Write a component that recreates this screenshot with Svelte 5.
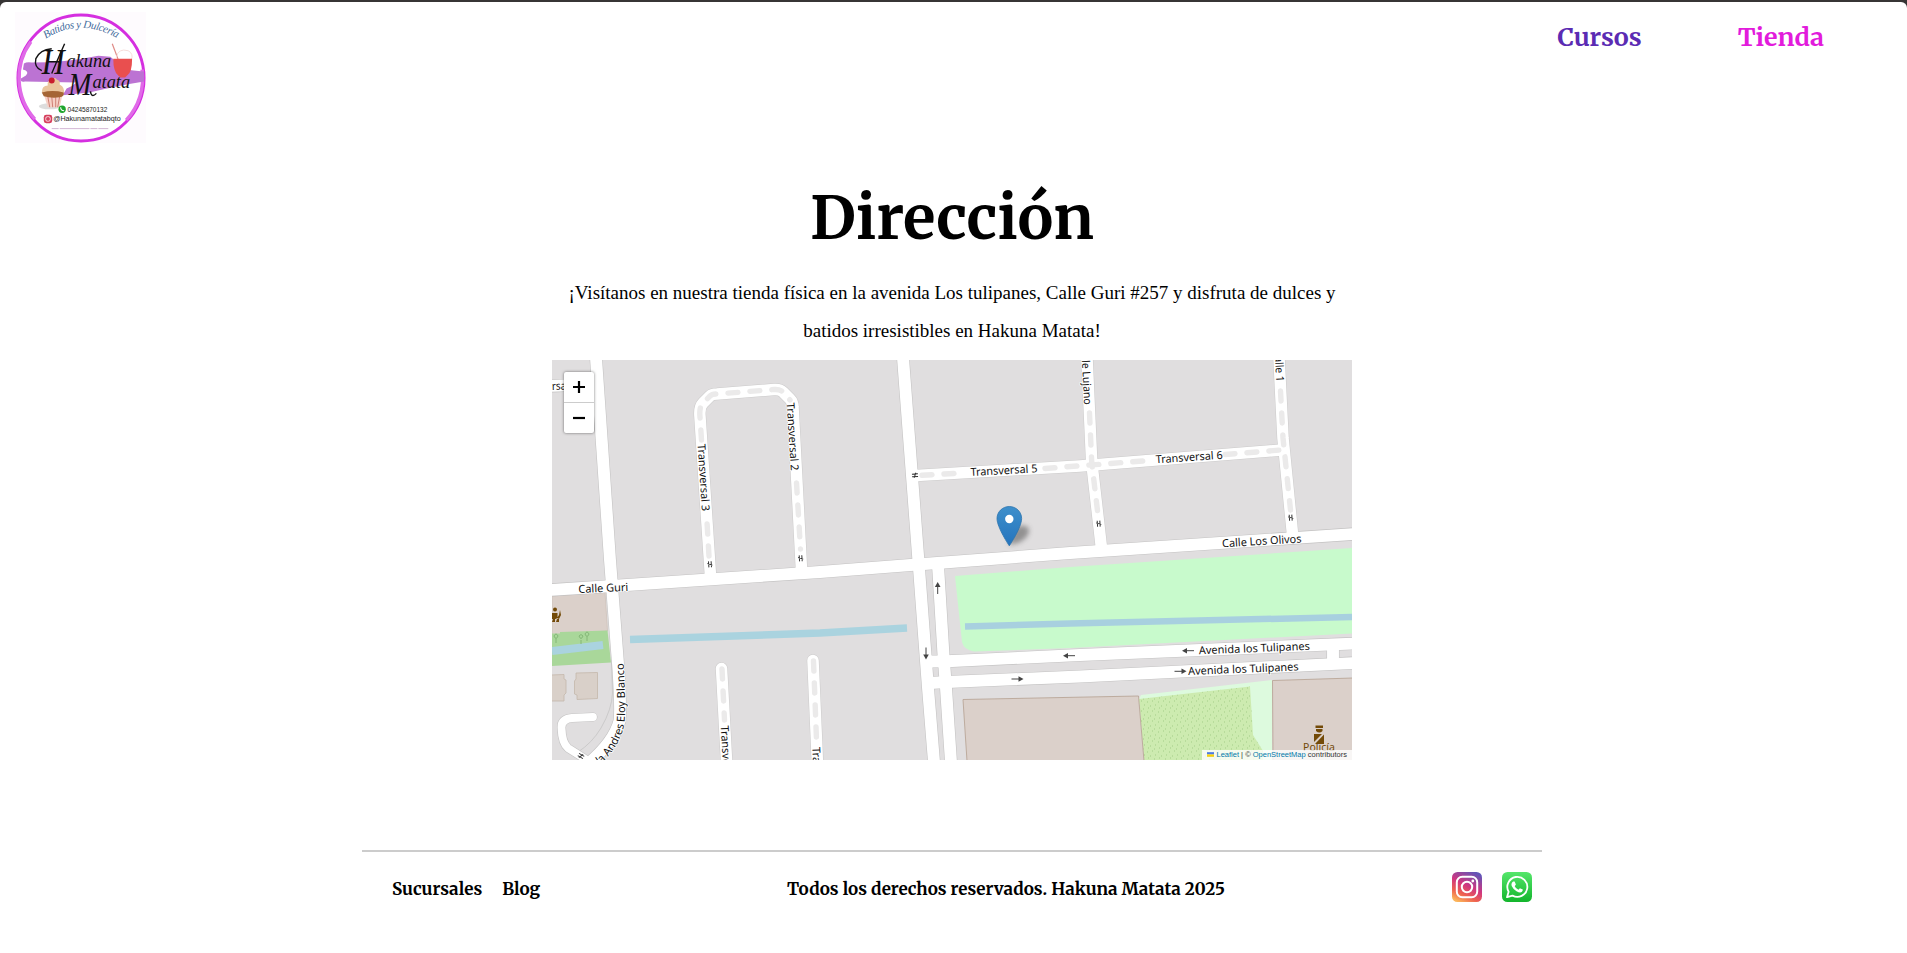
<script>
  const gates = [
    [248.7, 198.3, 86], [158, 204.3, 86], [363, 115.3, -3],
    [546.7, 163.7, 86], [738.7, 157.7, 86], [29, 396, 30]
  ];
  const arrows = [
    [385.7, 228, -90], [374, 293.5, 90], [517, 295.7, 180],
    [465.5, 319, 0], [636, 290.7, 180], [628.5, 311.3, 0]
  ];
  const roads = [
    'M-2 26 L46 24',
    'M44 -2 L58 200 L66.5 310 Q69 350 67.5 361 Q62 382 36 404',
    'M-2 230 L60 226 L268 212 L365 204.5 L518 193 L802 174',
    'M351 -2 L366 195 L376 328 L382 402',
    'M386 205 L391.5 295 L394 328 L399 402',
    'M376 301.5 L395 301.2 L528 295 L802 283.5',
    'M378 323 L395 322 L528 316.5 L802 303',
    'M781 285 V304'
  ];
  const alleys = [
    'M364 115.5 L528 106 L730 90',
    'M535 -2 L539.7 102 L549.7 190',
    'M727 -2 L731 78 L740.5 174',
    'M158.5 216 L148 57 Q147 47 151 43 L158 36 Q160 34 165 34 L222 29.5 Q228 29 231 32 L238 39 Q241 42 241 47 L249.5 210',
    'M169.5 308.5 L174.7 404',
    'M261 300.5 L265.5 404'
  ];
  const labels = [
    ['Transversal 5', 418.7, 116, -3.2, 67], ['Transversal 6', 604, 103.3, -3.9, 67],
    ['Calle Los Olivos', 670.3, 187.3, -3.5, 79.5], ['Calle Guri', 26.5, 233, -2.5, 50],
    ['Avenida los Tulipanes', 647, 294.3, -2.3, 111], ['Avenida los Tulipanes', 636.3, 315, -2.4, 110.5],
    ['Transversal 3', 145.6, 84.3, 86.3, 67], ['Transversal 2', 234.6, 43, 86.3, 68],
    ['Transversal 3', 168.8, 365.7, 87, 67], ['Transversal 2', 260.2, 387.3, 87, 67],
    ['Calle Lujano', 529, -15, 87, 60], ['Calle 1', 722.6, -10, 87, 32],
    ['rsal', 0, 30, -2, 17]
  ];
</script>

<div class="frame">
  <div class="page">
    <header>
      <svg class="logo" viewBox="0 0 132 132" role="img" aria-label="Hakuna Matata">
        <rect width="132" height="132" fill="#fefbfe" />
        <circle cx="66.500" cy="66.500" r="63.500" fill="#fff" stroke="#d52fe0" stroke-width="3" />
        <path d="M16 30 A62 62 0 0 0 20 108 M112 109 A62 62 0 0 0 128 58" fill="none" stroke="#e06be8" stroke-width="3.400" />
        <path d="M17 51 Q12 50 9 52 L8 58 Q15 60 11 64 L6 67 Q5 71 10 70 L62 71 Q58 75 52 77 L48 84 L75 81 Q105 74 130 70 L130 60 Q118 59 112 58 L96 45 L84 44 Q50 51 17 51Z" fill="#bc73d3" />
        <path id="logo-arc" d="M31 27 Q66 4 108 29" fill="none" />
        <text class="arc" textLength="76"><textPath href="#logo-arc">Batidos y Dulcería</textPath></text>
        <g class="script">
          <text x="27" y="62" font-size="36" textLength="23" lengthAdjust="spacingAndGlyphs">H</text>
          <text x="52" y="55" font-size="19" textLength="45" lengthAdjust="spacingAndGlyphs">akuna</text>
          <text x="54" y="84" font-size="32" textLength="23" lengthAdjust="spacingAndGlyphs">M</text>
          <text x="78" y="77" font-size="18" textLength="38" lengthAdjust="spacingAndGlyphs">atata</text>
        </g>
        <path d="M27 59 Q19 56 21 47 Q25 38 37 37 M50 32 Q42 50 37 62 M76 80 Q77 87 82 82" fill="none" stroke="#111" stroke-width="1.400" />
        <path d="M104 48 L98 32" stroke="#df8b86" stroke-width="1.200" />
        <path d="M102 46 Q104 36 114 39 Q120 42 117 49" fill="none" stroke="#f6ddda" />
        <path d="M99 47 H118 Q118 61 113 64 L111 66 H106 L104 64 Q99 60 99 47Z" fill="#e94f4f" />
        <ellipse cx="35" cy="95" rx="11" ry="3" fill="#ddd" />
        <path d="M29 83 H48 L45 96 H33Z" fill="#f6d0c6" />
        <path d="M33 85 L35 96 M37 85 L38 96 M41 85 V96 M45 85 L43 96" stroke="#cf7f74" />
        <path d="M27 81 Q27 74 33 74 Q32 69 37 68 Q40 65 42 68 Q46 69 45 73 Q51 76 49 83 Q38 87 27 81Z" fill="#eac59d" />
        <path d="M27 81 Q38 78 49 81 Q50 85 45 86 Q36 87 29 85Z" fill="#a56535" />
        <circle cx="37" cy="69" r="3" fill="#c91d2d" />
        <circle cx="47.500" cy="98" r="3.700" fill="#1fa52c" />
        <path d="M46 96 Q46 99.500 49.500 99.500" fill="none" stroke="#fff" stroke-width="1.100" />
        <text class="contact" x="53" y="101" textLength="40" lengthAdjust="spacingAndGlyphs">04245870132</text>
        <rect x="29" y="103.500" width="8.500" height="8.500" rx="2.500" fill="#d6405e" />
        <rect x="31" y="105.500" width="4.500" height="4.500" rx="1.500" fill="none" stroke="#fff" stroke-width=".8" />
        <text class="contact" x="38.500" y="110" textLength="68" lengthAdjust="spacingAndGlyphs">@Hakunamatatabqto</text>
        <path d="M37 117.500 H94" stroke="#c7a4c9" stroke-width=".8" stroke-dasharray="7 1 30 1" />
      </svg>
      <nav>
        <a class="courses" href="#cursos">Cursos</a>
        <a class="shop" href="#tienda">Tienda</a>
      </nav>
    </header>

    <main>
      <h1>Dirección</h1>
      <p>¡Visítanos en nuestra tienda física en la avenida Los tulipanes, Calle Guri #257 y disfruta de dulces y batidos irresistibles en Hakuna Matata!</p>

      <div class="map">
        <svg class="tiles" viewBox="0 0 800 400">
          <defs>
            <pattern id="scrub" width="11" height="10" patternUnits="userSpaceOnUse">
              <path d="M1 2h1M6 1h1M4 6h1M9 5h1M8 9h1M2 8h1" stroke="#a3cd87" />
            </pattern>
            <linearGradient id="pin" x2="0" y2="1">
              <stop stop-color="#3e8fcb" /><stop offset="1" stop-color="#2574bd" />
            </linearGradient>
            <filter id="soft" x="-40%" y="-40%" width="180%" height="180%"><feGaussianBlur stdDeviation="2.500" /></filter>
          </defs>
          <rect width="800" height="400" fill="#e0dedf" />

          <path d="M403 216 L518 207 L800 188 V273.500 L518 288 L422 291.500 Q412 290 410 282Z" fill="#c8facc" />
          <path d="M0 236 L53 232 L55.500 271 L0 275Z" fill="#dbd0ca" stroke="#cbbdb3" stroke-width=".6" />
          <path d="M0 273.500 H8 V272 L55.500 270.500 L59 302.500 L0 306Z" fill="#a9d79a" />
          <path d="M0 291 L51 285" stroke="#aad3df" stroke-width="8" />
          <g fill="none" stroke="#84b777" stroke-width="1">
            <path d="M29 284v-4m-2-4q2 5 4 0q-2-3-4 0M35 281v-4m-2-3q2 5 4 0q-2-4-4 0M4 283v-4m-2-3q2 5 4 0q-2-4-4 0" />
          </g>
          <path d="M78 279.500 L268 273 L355 268" fill="none" stroke="#aad3df" stroke-width="7.500" />
          <path d="M413 266.500 L518 263.500 L800 257" fill="none" stroke="#a8d0df" stroke-width="6.500" />
          <g fill="#d9d0c9" stroke="#c4b7ab" stroke-width=".8">
            <path d="M-1 315 L12 314.500 V319 L14 320 V333 L12 335 V341 L-1 341Z" />
            <path d="M24 313 L45.500 312.500 V338.500 L25 339.500 V335 L22.500 334 V321 L24 319Z" />
          </g>
          <path d="M587 339 L589 335 L720 320 V400 H592Z" fill="#ddfade" />
          <path d="M587 339 L698 326.500 L701 375 L711 391 V400 H592Z" fill="#cdebb0" />
          <path d="M587 339 L698 326.500 L701 375 L711 391 V400 H592Z" fill="url(#scrub)" />
          <g fill="#dbd0ca" stroke="#b9a697" stroke-width=".9">
            <path d="M411 339.500 L586.500 336 L592 401 H415Z" />
            <path d="M720.500 320.500 L801 318 V401 H721Z" />
          </g>

          <path d="M59.500 300 L60.500 333 Q60 349 49 368 Q40 383 26 392" fill="none" stroke="#cbcaca" />
          <g fill="none" stroke="#c3c2c2" stroke-width="13" stroke-linejoin="round">
            {#each roads as d}<path {d} />{/each}
          </g>
          <g fill="none" stroke="#cbcaca" stroke-width="12.500" stroke-linecap="round">
            {#each alleys as d}<path {d} />{/each}
          </g>
          <path d="M41 357 L20 358 Q9 359 9.500 368 Q10 383 16 388 L38 402" fill="none" stroke="#c5c4c4" stroke-width="9" stroke-linecap="round" />
          <g fill="none" stroke="#fff" stroke-width="11.900" stroke-linejoin="round">
            {#each roads as d}<path {d} />{/each}
          </g>
          <g fill="none" stroke="#fff" stroke-width="11.500" stroke-linecap="round">
            {#each alleys as d}<path {d} />{/each}
          </g>
          <path d="M41 357 L20 358 Q9 359 9.500 368 Q10 383 16 388 L38 402" fill="none" stroke="#fff" stroke-width="7.800" stroke-linecap="round" />
          <g fill="none" stroke="#ebeaea" stroke-width="5.400" stroke-linecap="round" stroke-dasharray="10 12">
            <path d="M370 115.300 L410 113" /><path d="M493 108.500 L597 100.500" /><path d="M673 94.500 L729 90" />
            <path d="M537.500 53 L539.700 102 L546 155" /><path d="M728.500 31 L731 78 L738.500 150" />
            <path d="M157 196 L155 162" /><path d="M149.500 80 L148 57 Q147 47 151 43 L158 36 Q160 34 165 34 L222 29.500 Q228 29 231 32 L238 40" />
            <path d="M244.500 123 L248.500 189" /><path d="M170 309 L172.500 360" /><path d="M261.500 301 L264.500 380" />
          </g>

          {#each gates as [x, y, angle]}
            <g transform="translate({x} {y}) rotate({angle})" stroke="#333">
              <path d="M-3 -1.300H3M-3 1.300H3M-1 2.500L1 -2.500" />
            </g>
          {/each}
          {#each arrows as [x, y, angle]}
            <g transform="translate({x} {y}) rotate({angle})">
              <path d="M-6 0H2" stroke="#444" /><path d="M1 -2.800L6 0L1 2.800Z" fill="#444" />
            </g>
          {/each}

          <g class="labels">
            {#each labels as [name, x, y, angle, length]}
              <text transform="translate({x} {y}) rotate({angle})" textLength={length} lengthAdjust="spacingAndGlyphs">{name}</text>
            {/each}
            <path id="blanco" d="M-14 448 L50 403 Q70 383 72.500 362 Q74 345 71.500 303" fill="none" />
            <text text-anchor="end"><textPath href="#blanco" startOffset="100%">Avenida Andres Eloy Blanco</textPath></text>
          </g>

          <g fill="#734a08">
            <path d="M763.500 365.500h7.500v2.500h-7.500zM764 369h6.500v2q-3 3-6.500 0z" />
            <path d="M762 374h8l-8 8zM772 374.500v9.500h-9z" />
            <circle cx="3" cy="249.500" r="2" /><path d="M0 253h5.500v5l-2 1h-3.500zM8 250l1 5-2 4-2-1 2-3zM1 259h2v3h-3zM5 259h2v3h-3z" />
          </g>
          <text class="poi" x="767" y="390.600" text-anchor="middle">Policía</text>

          <path d="M457 185 Q458 173 464 167 Q473 163 477 169 Q478 177 466 183Z" fill="#444" opacity=".5" filter="url(#soft)" />
          <path transform="translate(445 146.500) scale(.985 .96)" d="M12.500 0C5.600 0 0 5.600 0 12.500C0 21.900 12.500 41 12.500 41S25 21.900 25 12.500C25 5.600 19.400 0 12.500 0Z" fill="url(#pin)" stroke="#2b72ad" stroke-width=".8" />
          <circle cx="457.300" cy="159" r="4.200" fill="#fff" />
        </svg>

        <div class="zoom">
          <button aria-label="Acercar"><svg viewBox="0 0 14 14"><path d="M7 1v12M1 7h12" /></svg></button>
          <button aria-label="Alejar"><svg viewBox="0 0 14 14"><path d="M1 7h12" /></svg></button>
        </div>
        <div class="credit">
          <svg viewBox="0 0 12 8"><path fill="#4c7be1" d="M0 0h12v4H0z" /><path fill="#ffd500" d="M0 4h12v3H0z" /><path fill="#e0bc00" d="M0 7h12v1H0z" /></svg>
          <a href="#leaflet">Leaflet</a> | © <a href="#osm">OpenStreetMap</a> contributors
        </div>
      </div>
    </main>

    <footer>
      <div class="links"><a class="branches" href="#sucursales">Sucursales</a><a class="blog" href="#blog">Blog</a></div>
      <span class="rights">Todos los derechos reservados. Hakuna Matata 2025</span>
      <div class="social">
        <svg viewBox="0 0 30 30" role="img" aria-label="Instagram">
          <defs>
            <linearGradient id="ig" x1=".25" y1="1" x2=".75" y2="0">
              <stop stop-color="#fbb45a" /><stop offset=".25" stop-color="#ee6150" /><stop offset=".55" stop-color="#cf3680" /><stop offset="1" stop-color="#6155b8" />
            </linearGradient>
          </defs>
          <rect width="30" height="30" rx="5.500" fill="url(#ig)" />
          <rect x="4.800" y="4.800" width="20.400" height="20.400" rx="5.500" fill="none" stroke="#fff" stroke-width="2" />
          <circle cx="15" cy="15" r="5.200" fill="none" stroke="#fff" stroke-width="2" />
          <circle cx="20.800" cy="9" r="1.400" fill="#fff" />
        </svg>
        <svg viewBox="0 0 30 30" role="img" aria-label="WhatsApp">
          <defs><linearGradient id="wa" x2="0" y2="1"><stop stop-color="#55e66b" /><stop offset="1" stop-color="#13b52c" /></linearGradient></defs>
          <rect width="30" height="30" rx="5.500" fill="url(#wa)" />
          <path d="M5 25.200 L6.600 19.700 A10 10 0 1 1 10.500 23.600Z" fill="none" stroke="#fff" stroke-width="1.800" stroke-linejoin="round" />
          <path d="M11.300 9.500h1.300l1.300 3-1.200 1.700q1.300 2.600 3.800 3.600l1.400-1.600 2.900 1.400q.2 1.500-1.100 2.400-1.700 1.200-5.200-.8-3.500-2.100-4.800-5.200-.9-3 1.600-4.500z" fill="#fff" />
        </svg>
      </div>
    </footer>
  </div>
</div>

<style>
  :global(body) { margin: 0; background: #fff; }
  .frame { height: 951px; padding-top: 2px; background: linear-gradient(#373535 20px, #fff 20px); }
  .page { height: 951px; background: #fff; border-radius: 6px 6px 0 0; display: flex; flex-direction: column; overflow: hidden; }
  a { text-decoration: none; color: inherit; }
  header { display: flex; justify-content: space-between; height: 160px; box-sizing: border-box; padding: 10px 83px 0 15px; }
  .logo { width: 131px; height: 131px; }
  .arc { font: italic 11px "Liberation Serif", serif; fill: #456c9d; }
  .script { font-family: "Liberation Serif", serif; font-style: italic; fill: #111; }
  .contact { font: 6.5px "Liberation Sans", sans-serif; fill: #222; }
  nav, h1, footer { font-family: Merriweather, "DejaVu Serif Condensed", "DejaVu Serif", serif; font-weight: 700; }
  nav { display: flex; gap: 96px; padding-top: 9px; font-size: 25px; line-height: 32px; }
  .courses { color: #5b2bb3; }
  .shop { color: #e21bdc; }
  main { width: 800px; margin: 0 auto; display: flex; flex-direction: column; align-items: center; position: relative; left: -1.5px; }
  h1 { margin: 16px 0 0; height: 94px; font-size: 60px; line-height: 80px; white-space: nowrap; }
  p { margin: 0; height: 88px; box-sizing: border-box; padding: 2px 0 0; text-align: center; font: 19px/38px "Liberation Serif", serif; color: #000; }
  .map { width: 800px; height: 400px; position: relative; overflow: hidden; }
  .tiles { display: block; width: 800px; height: 400px; }
  .labels { font: 11px "Noto Sans", sans-serif; fill: #111; stroke: #fff; stroke-width: 1.5px; paint-order: stroke; }
  .labels path { stroke: none; }
  .poi { font: 10.5px "Noto Sans", sans-serif; fill: #734a08; }
  .zoom { position: absolute; left: 12px; top: 11.5px; width: 30px; background: #fff; border-radius: 2px; box-shadow: 0 0 3px rgba(0,0,0,.55); }
  button { display: flex; width: 30px; height: 30px; align-items: center; justify-content: center; padding: 0; border: 0; background: none; }
  button:first-child { border-bottom: 1px solid #ccc; height: 31px; }
  button svg { width: 14px; height: 14px; stroke: #000; stroke-width: 2.2; fill: none; }
  .credit { position: absolute; right: 0; bottom: 0; height: 10px; padding: 0 5px; display: block; background: rgba(255,255,255,.8); font: 7.5px/10px "Liberation Sans", sans-serif; color: #333; white-space: nowrap; }
  .credit a { color: #0078a8; }
  .credit svg { width: 7px; height: 5px; }
  footer { width: 1180px; height: 80px; margin: 90px auto 0; position: relative; left: -1.5px; border-top: 2px solid #ccc; box-sizing: border-box; padding: 20px 10px 0 30px; display: grid; grid-template-columns: 395px 1fr auto; align-items: start; font-size: 17px; line-height: 34px; color: #000; white-space: nowrap; }
  .links { display: flex; gap: 20px; }
  .social { display: flex; gap: 20px; }
  .social svg { width: 30px; height: 30px; }
</style>
